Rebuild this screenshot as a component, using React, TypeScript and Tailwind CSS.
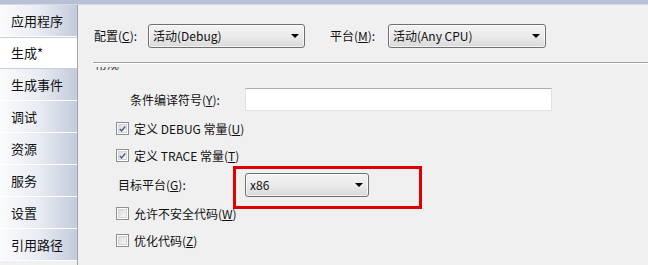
import React from 'react';

const font = "font-['Noto_Sans_CJK_SC','Noto_Sans',sans-serif]";

const tabs = ['应用程序', '生成*', '生成事件', '调试', '资源', '服务', '设置', '引用路径'];

const Arrow = () => (
  <svg width="8" height="4" viewBox="0 0 8 4" className="shrink-0">
    <path d="M0 0 H8 L4 4 Z" fill="#000" />
  </svg>
);

const Combo = ({ value, w }: { value: string; w: string }) => (
  <div
    className={`${w} h-[24px] flex items-center justify-between pl-[4px] pr-[5px] rounded-[3px] border border-[#707070] bg-gradient-to-b from-[#f3f3f3] via-[#ebebeb] to-[#d9d9d9] shadow-[inset_0_0_0_1px_rgba(255,255,255,0.7)]`}
  >
    <span className="leading-none">{value}</span>
    <Arrow />
  </div>
);

const Check = ({ checked }: { checked: boolean }) => (
  <div className="w-[13px] h-[13px] border border-[#8f8f8f] bg-white p-[1px] shrink-0">
    <div className="w-full h-full border border-[#d4d4d4] bg-gradient-to-br from-[#dcdcdc] to-[#f8f8f8] flex items-center justify-center">
      {checked && (
        <svg width="9" height="8" viewBox="0 0 9 8">
          <path d="M1 4 L3.3 6.5 L8 0.8" fill="none" stroke="#4a5a94" strokeWidth="1.8" />
        </svg>
      )}
    </div>
  </div>
);

const CheckRow = ({ checked, children }: { checked: boolean; children: React.ReactNode }) => (
  <div className="h-[27px] flex items-center gap-[5px] pl-[38px]">
    <Check checked={checked} />
    <span>{children}</span>
  </div>
);

export default function App() {
  return (
    <div className={`${font} text-[12px] text-[#111] w-[648px] h-[265px] flex flex-col bg-[#f0f0f0] overflow-hidden`}>
      <div className="h-[5px] shrink-0 bg-[#b7c0d4] border-b border-[#d3d9e5]" />
      <div className="flex flex-1 min-h-0">
        {/* 左侧选项卡 */}
        <div className="w-[77px] shrink-0 flex flex-col">
          {tabs.map((t) =>
            t === '生成*' ? (
              <div key={t} className="h-[32px] shrink-0 flex items-center pl-[11px] bg-white border-y border-[#c9ceda] text-[13px]">
                {t}
              </div>
            ) : (
              <div
                key={t}
                className="h-[32px] shrink-0 flex items-center pl-[11px] bg-gradient-to-r from-[#fafbfc] via-[#e9ecf3] to-[#c3cadb] border-b border-white text-[13px]"
              >
                {t}
              </div>
            )
          )}
        </div>

        {/* 内容面板 */}
        <div className="flex-1 flex flex-col border-l border-[#a5a5a5]">
          <div className="flex items-center pl-[16px] pt-[19px]">
            <span className="w-[54px]">
              配置(<span className="underline">C</span>):
            </span>
            <Combo value="活动(Debug)" w="w-[157px]" />
            <span className="ml-[25px] w-[58px]">
              平台(<span className="underline">M</span>):
            </span>
            <Combo value="活动(Any CPU)" w="w-[158px]" />
          </div>

          <div className="ml-[15px] mt-[14px] border-t border-[#a0a0a0] border-b border-b-white" />

          <div className="flex-1 overflow-hidden mt-[3px]">
            <div className="mt-[-11px] pl-[17px] leading-[16px] text-[#333]">常规</div>

            <div className="flex items-center mt-[16px] h-[23px]">
              <span className="pl-[52px] w-[167px]">
                条件编译符号(<span className="underline">Y</span>):
              </span>
              <div className="w-[307px] h-[23px] bg-white border border-[#dfe2e8] border-t-[#abadb3]" />
            </div>

            <div className="mt-[4px]">
              <CheckRow checked>
                定义 DEBUG 常量(<span className="underline">U</span>)
              </CheckRow>
              <CheckRow checked>
                定义 TRACE 常量(<span className="underline">T</span>)
              </CheckRow>
            </div>

            <div className="flex items-center h-[31px]">
              <span className="pl-[40px] w-[167px]">
                目标平台(<span className="underline">G</span>):
              </span>
              <div className="relative">
                <Combo value="x86" w="w-[124px]" />
                <div className="absolute left-[-12px] top-[-7px] w-[189px] h-[43px] border-[3px] border-[#e00000] pointer-events-none" />
              </div>
            </div>

            <CheckRow checked={false}>
              允许不安全代码(<span className="underline">W</span>)
            </CheckRow>
            <CheckRow checked={false}>
              优化代码(<span className="underline">Z</span>)
            </CheckRow>
          </div>
        </div>
      </div>
    </div>
  );
}
